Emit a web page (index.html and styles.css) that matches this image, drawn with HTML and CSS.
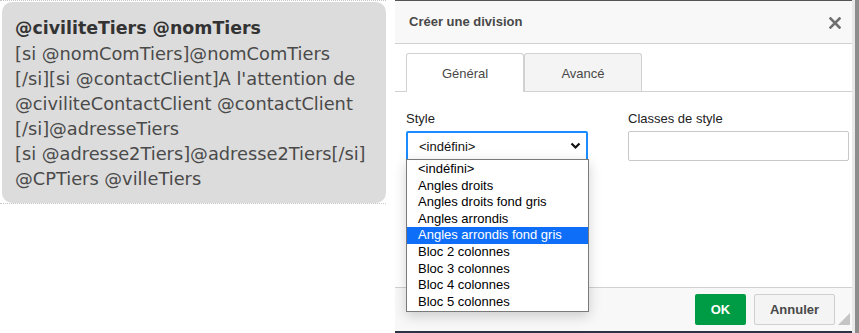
FILE: index.html
```html
<!DOCTYPE html>
<html lang="fr">
<head>
  <meta charset="UTF-8">
  <title>Créer une division</title>
  <link rel="stylesheet" href="styles.css">
</head>
<body>
<div class="page">
  <div class="preview">
    <div class="bubble">
      <b>@civiliteTiers @nomTiers</b><br>
      [si @nomComTiers]@nomComTiers<br>
      [/si][si @contactClient]A l'attention de<br>
      @civiliteContactClient @contactClient<br>
      [/si]@adresseTiers<br>
      [si @adresse2Tiers]@adresse2Tiers[/si]<br>
      @CPTiers @villeTiers
    </div>
  </div>

  <div class="dialog">
    <div class="dlg-head">
      <span class="dlg-title">Créer une division</span>
      <svg class="dlg-close" width="12" height="12" viewBox="0 0 12 12">
        <path d="M1.5 1.5 L10.5 10.5 M10.5 1.5 L1.5 10.5" stroke="#6f6f6f" stroke-width="2.6" stroke-linecap="square"/>
      </svg>
    </div>

    <div class="dlg-tabs">
      <span class="tab active">Général</span>
      <span class="tab">Avancé</span>
    </div>

    <div class="dlg-body">
      <div class="field field-style">
        <label>Style</label>
        <div class="select">
          <span>&lt;indéfini&gt;</span>
          <svg width="11" height="8" viewBox="0 0 11 8">
            <path d="M1.5 1.5 L5.5 5.5 L9.5 1.5" fill="none" stroke="#111" stroke-width="2.2"/>
          </svg>
        </div>
        <ul class="options">
          <li>&lt;indéfini&gt;</li>
          <li>Angles droits</li>
          <li>Angles droits fond gris</li>
          <li>Angles arrondis</li>
          <li class="selected">Angles arrondis fond gris</li>
          <li>Bloc 2 colonnes</li>
          <li>Bloc 3 colonnes</li>
          <li>Bloc 4 colonnes</li>
          <li>Bloc 5 colonnes</li>
        </ul>
      </div>
      <div class="field field-classes">
        <label>Classes de style</label>
        <div class="input"></div>
      </div>
    </div>

    <div class="dlg-foot">
      <span class="btn btn-ok">OK</span>
      <span class="btn btn-cancel">Annuler</span>
      <span class="grip"></span>
    </div>
  </div>

  <div class="edge"></div>
</div>
</body>
</html>
```

FILE: styles.css
```css
* {
  margin: 0;
  padding: 0;
  box-sizing: border-box;
}

html, body {
  height: 100%;
}

body {
  background: #fff;
  overflow: hidden;
}

ul {
  list-style: none;
}

.page {
  display: flex;
  height: 333px;
}

/* apercu a gauche */
.preview {
  width: 386px;
  height: 204px;
  border-top: 1px dotted #c4c4c4;
  border-bottom: 1px dotted #c4c4c4;
  padding: 1px 0 0 2px;
}

.bubble {
  height: 201px;
  background-color: #dcdcdc;
  border-radius: 10px;
  padding: 13px 0 0 13px;
  font-family: "DejaVu Sans", sans-serif;
  font-size: 17.8px;
  line-height: 25px;
  color: #4a4a4a;
  white-space: nowrap;
}

.bubble b {
  color: #333;
  font-size: 17.4px;
}

/* boite de dialogue */
.dialog {
  margin-left: 9px;
  width: 457px;
  display: flex;
  flex-direction: column;
  background: #fff;
  border-top: 1px solid #555;
  border-bottom: 2px solid #2b3345;
  font-family: "Liberation Sans", Arial, sans-serif;
  font-size: 13px;
  color: #000;
}

.dlg-head {
  height: 43px;
  flex: none;
  display: flex;
  align-items: center;
  justify-content: space-between;
  padding: 0 11px 0 14px;
  background: #f8f8f8;
  border-bottom: 1px solid #d1d1d1;
}

.dlg-title {
  font-weight: bold;
  color: #484848;
  margin-top: -2px;
}

.dlg-close {
  margin-top: 1px;
}

.dlg-tabs {
  flex: none;
  display: flex;
  margin-top: 9px;
  padding-left: 11px;
  border-bottom: 1px solid #d1d1d1;
}

.tab {
  width: 118px;
  height: 38px;
  display: flex;
  align-items: center;
  justify-content: center;
  border: 1px solid #d1d1d1;
  border-bottom: none;
  border-radius: 3px 3px 0 0;
  background: #f4f4f4;
  color: #484848;
  margin-bottom: -1px;
  padding-top: 1px;
}

.tab.active {
  background: #fff;
  height: 39px;
}

.dlg-body {
  flex: 1;
  display: flex;
  gap: 40px;
  padding: 19px 3px 0 11px;
}

.field label {
  display: block;
  color: #222;
  line-height: 15px;
  margin-bottom: 5px;
}

.field-style {
  position: relative;
  width: 182px;
}

.field-classes {
  width: 221px;
}

.select {
  height: 30px;
  border: 2px solid #1a8cff;
  border-radius: 2px;
  display: flex;
  align-items: center;
  justify-content: space-between;
  padding: 0 5px 0 11px;
  color: #111;
}

.input {
  height: 30px;
  border: 1px solid #c8c8c8;
  border-radius: 2px;
}

/* liste deroulante ouverte */
.options {
  position: absolute;
  left: 0;
  top: 48px;
  width: 183px;
  border: 1px solid #7a7a7a;
  background: #fff;
  padding: 1px 0;
  box-shadow: 0 4px 12px rgba(0, 0, 0, 0.18);
  z-index: 2;
}

.options li {
  height: 16.6px;
  line-height: 16.6px;
  padding-left: 11px;
  color: #000;
}

.options li.selected {
  background: #0f6ef7;
  color: #fff;
}

.dlg-foot {
  height: 44px;
  flex: none;
  position: relative;
  display: flex;
  justify-content: flex-end;
  align-items: center;
  gap: 8px;
  padding-right: 17px;
  background: #f8f8f8;
  border-top: 1px solid #d1d1d1;
}

.btn {
  height: 31px;
  display: flex;
  align-items: center;
  justify-content: center;
  border-radius: 2px;
  font-weight: bold;
  font-size: 13px;
}

.btn-ok {
  width: 51px;
  background: #009c45;
  color: #fff;
}

.btn-cancel {
  width: 81px;
  background: #f4f4f4;
  border: 1px solid #cfcfcf;
  color: #484848;
}

.grip {
  position: absolute;
  right: 2px;
  bottom: 6px;
  width: 0;
  height: 0;
  border-left: 12px solid transparent;
  border-bottom: 12px solid #c4c4c4;
}

.edge {
  flex: 1;
  background: #8d8d8d;
  border-left: 3px solid #e9e9e9;
}
```
